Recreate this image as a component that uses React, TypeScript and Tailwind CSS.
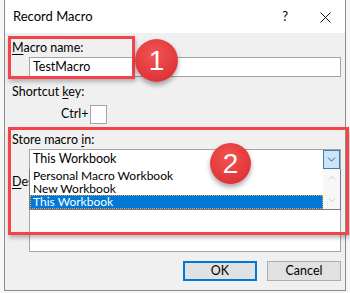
import { ChevronDown, ChevronUp } from "lucide-react";

const font = { fontFamily: 'Lato, "Noto Sans", sans-serif' };

function Underlined({ text, at }: { text: string; at: number }) {
    return (
        <>
            {text.slice(0, at)}
            <span className="underline underline-offset-2">{text[at]}</span>
            {text.slice(at + 1)}
        </>
    );
}

function Badge({ n, className }: { n: string; className: string }) {
    return (
        <div
            className={`absolute flex items-center justify-center rounded-full bg-[radial-gradient(circle_at_45%_35%,#f25450,#e0353a_70%,#c92a2f)] text-[28px] leading-none text-white shadow-[0_3px_5px_rgba(0,0,0,0.35)] ${className}`}
            style={{ fontFamily: '"Liberation Sans", Arial, sans-serif' }}
        >
            {n}
        </div>
    );
}

export default function App() {
    return (
        <div className="relative h-[293px] w-[350px] overflow-hidden bg-[#f7f7f7] text-[12.5px] text-black" style={font}>
            {/* Dialog */}
            <div className="ml-[4px] flex h-[291px] w-[342px] flex-col border-x border-b border-[#8c8c8c] bg-[#f0f0f0]">
                {/* Title bar */}
                <div className="flex h-[33px] shrink-0 items-center bg-white pl-[8px] pr-[14px]">
                    <span className="text-[13px]">Record Macro</span>
                    <span className="ml-auto mr-[32px] text-[13px]">?</span>
                    <svg width="11" height="11" viewBox="0 0 11 11" className="mt-[1px]">
                        <path d="M0.5 0.5 L10.5 10.5 M10.5 0.5 L0.5 10.5" stroke="#111" strokeWidth="1" />
                    </svg>
                </div>

                {/* Body */}
                <div className="flex flex-1 flex-col pl-[7px] pr-[4px]">
                    <div className="mt-[7px] h-[16px] leading-[16px]">
                        <Underlined text="Macro name:" at={0} />
                    </div>
                    <div className="ml-[17px] mt-[1px] flex h-[20px] items-center border border-[#a5a5a5] bg-white pl-[3px]">
                        TestMacro
                    </div>

                    <div className="mt-[7px] h-[16px] leading-[16px]">
                        Shortcut <Underlined text="key:" at={0} />
                    </div>
                    <div className="ml-[49px] mt-[5px] flex items-center gap-[2px]">
                        <span>Ctrl+</span>
                        <div className="h-[19px] w-[17px] border border-[#a5a5a5] bg-white" />
                    </div>

                    <div className="mt-[8px] h-[16px] leading-[16px]">
                        Store macro <Underlined text="in:" at={0} />
                    </div>
                    <div className="relative ml-[17px] mt-[1px]">
                        <div className="flex h-[21px] items-center border border-[#a5a5a5] bg-white pl-[3px]">
                            This Workbook
                            <div className="ml-auto flex h-[19px] w-[17px] items-center justify-center border border-[#3c7fb1] bg-[#cce4f7]">
                                <ChevronDown size={13} strokeWidth={1.5} color="#333" />
                            </div>
                        </div>

                        {/* Open dropdown list */}
                        <div className="absolute left-0 top-[20px] z-10 flex h-[41px] w-full border-x border-b border-[#7a7a7a] bg-white">
                            <div className="flex flex-1 flex-col text-[12px] leading-[13px]">
                                <div className="h-[13px] pl-[3px]">Personal Macro Workbook</div>
                                <div className="h-[13px] pl-[3px]">New Workbook</div>
                                <div className="h-[14px] border border-dotted border-[#f0a030] bg-[#0078d7] pl-[2px] leading-[12px] text-white">
                                    This Workbook
                                </div>
                            </div>
                            <div className="flex w-[17px] flex-col items-center justify-between bg-[#f7f7f7] py-[3px]">
                                <ChevronUp size={12} strokeWidth={1.5} color="#c0c0c0" />
                                <ChevronDown size={12} strokeWidth={1.5} color="#c0c0c0" />
                            </div>
                        </div>
                    </div>

                    {/* label mostly hidden behind the open list */}
                    <div className="mt-[4px] h-[16px] w-[17px] overflow-hidden whitespace-nowrap leading-[16px]">
                        <Underlined text="Description:" at={0} />
                    </div>
                    <div className="ml-[17px] mt-[4px] h-[58px] border border-[#a5a5a5] bg-white" />

                    <div className="mt-[9px] flex justify-end gap-[10px]">
                        <button className="flex h-[20px] w-[74px] items-center justify-center border-2 border-[#0078d7] bg-[#e1e1e1]">
                            OK
                        </button>
                        <button className="flex h-[20px] w-[74px] items-center justify-center border border-[#adadad] bg-[#e1e1e1]">
                            Cancel
                        </button>
                    </div>
                </div>
            </div>

            {/* Annotations */}
            <div className="absolute left-[8px] top-[36px] h-[43px] w-[127px] border-[3px] border-[#f2444a] shadow-[1px_3px_4px_rgba(0,0,0,0.25)]" />
            <div className="absolute left-[8px] top-[127px] z-20 h-[108px] w-[341px] border-[3px] border-[#f2444a] shadow-[1px_3px_4px_rgba(0,0,0,0.25)]" />
            <Badge n="1" className="left-[135px] top-[39px] h-[43px] w-[43px]" />
            <Badge n="2" className="left-[210px] top-[143px] z-30 h-[41px] w-[41px]" />
        </div>
    );
}
